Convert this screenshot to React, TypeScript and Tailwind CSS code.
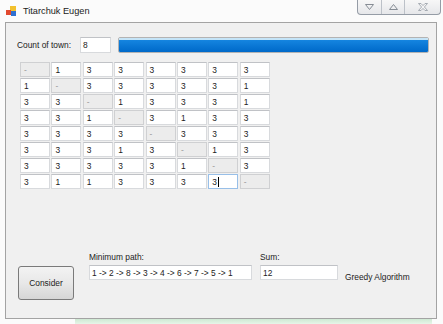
const matrix = [
  ["-", "1", "3", "3", "3", "3", "3", "3"],
  ["1", "-", "3", "3", "3", "3", "3", "1"],
  ["3", "3", "-", "1", "3", "3", "3", "1"],
  ["3", "3", "1", "-", "3", "1", "3", "3"],
  ["3", "3", "3", "3", "-", "3", "3", "3"],
  ["3", "3", "3", "1", "3", "-", "1", "3"],
  ["3", "3", "3", "3", "3", "1", "-", "3"],
  ["3", "1", "1", "3", "3", "3", "3", "-"],
];

function AppIcon() {
  return (
    <svg width="10" height="10" viewBox="0 0 10 10" className="shrink-0">
      <rect x="4" y="0" width="6" height="6" fill="#f2c12e" />
      <rect x="5" y="5" width="5" height="5" fill="#2f6fd0" />
      <rect x="0" y="4" width="5" height="5" fill="#e2492f" />
    </svg>
  );
}

function CaptionButtons() {
  return (
    <div className="ml-auto mr-[2px] flex h-[15px] self-start overflow-hidden rounded-b-[4px] border border-t-0 border-[#959ca6] bg-gradient-to-b from-[#f7f7f7] to-[#e6e7ea]">
      <div className="flex w-[24px] items-center justify-center border-r border-[#bcc1c8]">
        <svg width="9" height="6" viewBox="0 0 9 6">
          <path d="M0.5 0.5 H8.5 L4.5 5.5 Z" fill="none" stroke="#868c94" strokeWidth="1" />
        </svg>
      </div>
      <div className="flex w-[23px] items-center justify-center border-r border-[#bcc1c8]">
        <svg width="9" height="6" viewBox="0 0 9 6">
          <path d="M0.5 5.5 H8.5 L4.5 0.5 Z" fill="none" stroke="#868c94" strokeWidth="1" />
        </svg>
      </div>
      <div className="flex w-[35px] items-center justify-center">
        <svg width="10" height="8" viewBox="0 0 10 8">
          <path
            d="M0.5 0.5 H3 L5 2.6 L7 0.5 H9.5 L6.4 4 L9.5 7.5 H7 L5 5.4 L3 7.5 H0.5 L3.6 4 Z"
            fill="#f5f5f5"
            stroke="#969ca4"
            strokeWidth="0.8"
          />
        </svg>
      </div>
    </div>
  );
}

function Cell({ value, focused }: { value: string; focused?: boolean }) {
  if (value === "-") {
    return (
      <div className="flex h-[15px] items-center border border-[#cfd0d2] bg-[#ececec] pl-[3px] text-[#9a9a9a]">
        -
      </div>
    );
  }
  return (
    <div
      className={
        focused
          ? "flex h-[15px] items-center border border-[#98bfe8] bg-white pl-[3px]"
          : "flex h-[15px] items-center border border-[#d8dadd] border-t-[#c0c2c6] bg-white pl-[3px]"
      }
    >
      {value}
      {focused && <span className="ml-[1px] inline-block h-[10px] w-[1px] bg-black" />}
    </div>
  );
}

export default function App() {
  return (
    <div className="flex h-[324px] w-[443px] flex-col overflow-hidden bg-[#fbfbfb] font-['Liberation_Sans',Arial,sans-serif] text-[8.4px] leading-[10px] text-[#222]">
      <div className="flex h-[22px] items-center">
        <div className="ml-[6px]">
          <AppIcon />
        </div>
        <span className="ml-[7px] text-[9.2px] text-[#1a1a1a]">Titarchuk Eugen</span>
        <CaptionButtons />
      </div>

      <div className="ml-[5px] flex h-[297px] w-[432px] flex-col border border-[#a3a3a3] bg-[#f0f0f0]">
        <div className="ml-[11px] mt-[14px] flex h-[16px] items-center">
          <span className="w-[63px]">Count of town:</span>
          <div className="flex h-[16px] w-[31px] items-center border border-[#d8dadd] border-t-[#c0c2c6] bg-white pl-[2px]">
            8
          </div>
          <div className="ml-[7px] flex h-[16px] w-[311px] flex-col overflow-hidden rounded-[2px] border border-[#b3b3b3] bg-white">
            <div className="h-[2px] bg-[#c4e4f8]" />
            <div className="flex-1 bg-gradient-to-b from-[#1585e0] to-[#0069c9]" />
          </div>
        </div>

        <div className="ml-[14px] mt-[9px] grid w-fit grid-cols-[repeat(8,30px)] gap-x-[1.4px] gap-y-[1px]">
          {matrix.map((row, r) =>
            row.map((v, c) => <Cell key={`${r}-${c}`} value={v} focused={r === 7 && c === 6} />)
          )}
        </div>

        <div className="mt-auto mb-[18px] ml-[12px] flex items-start">
          <button className="mt-[14px] flex h-[34px] w-[56px] items-center justify-center rounded-[3px] border border-[#7a7a7a] bg-gradient-to-b from-[#f3f3f3] via-[#e8e8e8] to-[#d6d6d6] text-[8.4px] text-[#222]">
            Consider
          </button>
          <div className="ml-[15px] flex flex-col">
            <span className="h-[10px]">Minimum path:</span>
            <div className="mt-[3px] flex h-[15px] w-[163px] items-center border border-[#d8dadd] border-t-[#c0c2c6] bg-white pl-[2px]">
              1 -&gt; 2 -&gt; 8 -&gt; 3 -&gt; 4 -&gt; 6 -&gt; 7 -&gt; 5 -&gt; 1
            </div>
          </div>
          <div className="ml-[8px] flex flex-col">
            <span className="h-[10px]">Sum:</span>
            <div className="mt-[3px] flex h-[15px] w-[78px] items-center border border-[#d8dadd] border-t-[#c0c2c6] bg-white pl-[2px]">
              12
            </div>
          </div>
          <span className="ml-[7px] mt-[20px]">Greedy Algorithm</span>
        </div>
      </div>

      <div className="flex flex-1">
        <div className="w-[75px]" />
        <div className="w-[357px] bg-gradient-to-b from-[#cfe9d3] to-[#e6f5e8]" />
      </div>
    </div>
  );
}
